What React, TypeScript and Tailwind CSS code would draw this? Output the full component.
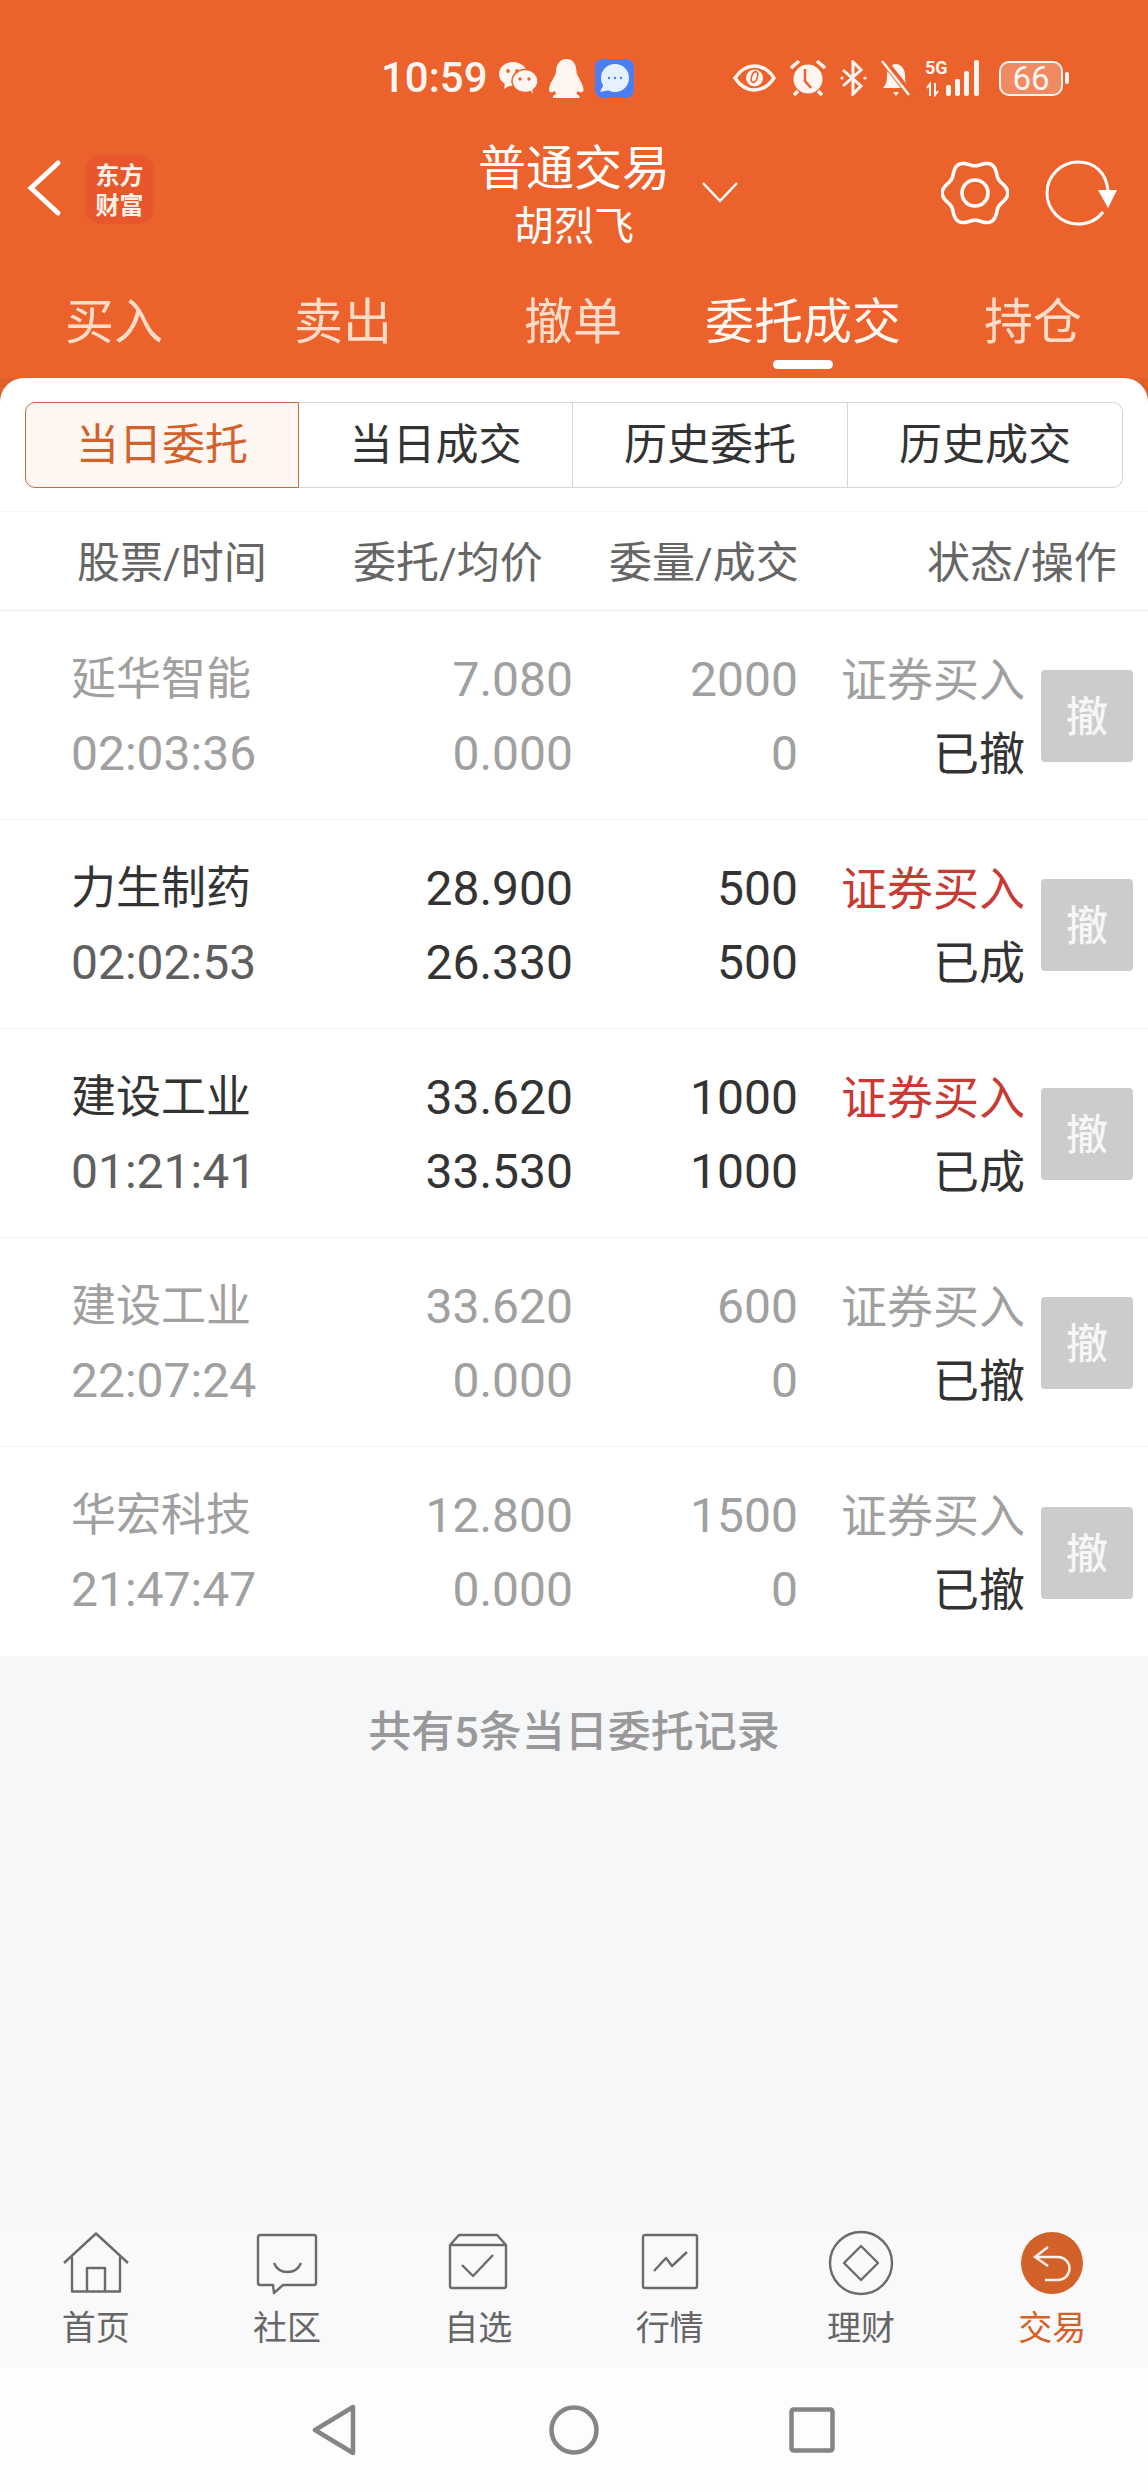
import React from 'react';

const rows = [
  { n: '延华智能', t: '02:03:36', a: '7.080', b: '0.000', c: '2000', d: '0', s: '已撤', on: false },
  { n: '力生制药', t: '02:02:53', a: '28.900', b: '26.330', c: '500', d: '500', s: '已成', on: true },
  { n: '建设工业', t: '01:21:41', a: '33.620', b: '33.530', c: '1000', d: '1000', s: '已成', on: true },
  { n: '建设工业', t: '22:07:24', a: '33.620', b: '0.000', c: '600', d: '0', s: '已撤', on: false },
  { n: '华宏科技', t: '21:47:47', a: '12.800', b: '0.000', c: '1500', d: '0', s: '已撤', on: false },
];

function Row({ r }: { r: (typeof rows)[number] }) {
  const main = r.on ? 'text-[#333333]' : 'text-[#a0a0a0]';
  return (
    <div className="flex h-[209px] items-center border-b border-[#f0f0f0] bg-white last:border-b-0">
      <div className="ml-[71px] w-[220px] pt-[3px] leading-[74px]">
        <div className={`text-[45px] ${main}`}>{r.n}</div>
        <div className={`text-[48px] ${r.on ? 'text-[#5f5f5f]' : 'text-[#a0a0a0]'}`}>{r.t}</div>
      </div>
      <div className={`w-[282px] pt-[3px] text-right text-[48px] leading-[74px] ${main}`}>
        <div>{r.a}</div><div>{r.b}</div>
      </div>
      <div className={`w-[225px] pt-[3px] text-right text-[48px] leading-[74px] ${main}`}>
        <div>{r.c}</div><div>{r.d}</div>
      </div>
      <div className="w-[227px] pt-[3px] text-right text-[46px] leading-[74px]">
        <div className={r.on ? 'text-[#c93a33]' : 'text-[#a0a0a0]'}>证券买入</div>
        <div className="text-[#333333]">{r.s}</div>
      </div>
      <div className="mt-[2px] ml-[16px] flex h-[92px] w-[92px] items-center justify-center rounded-[4px] bg-[#cccccc] pt-[3px] text-[42px] font-medium text-[#f6f6f6]">撤</div>
    </div>
  );
}

function gearPath() {
  const pts: string[] = [];
  for (let i = 0; i < 180; i++) {
    const th = (i / 180) * Math.PI * 2;
    const r = 30 + 2.8 * Math.cos(6 * th);
    pts.push(`${(34 + r * Math.cos(th)).toFixed(2)} ${(33 + r * Math.sin(th)).toFixed(2)}`);
  }
  return 'M' + pts.join('L') + 'Z';
}

function Status() {
  const c = '#fff5f0';
  const o = '#eb622d';
  return (
    <div className="flex h-[130px] items-center pt-[26px] pl-[381px] text-[#fff5f0]">
      <span className="w-[111px] text-[42px] leading-[50px] font-medium">10:59</span>
      <svg width="39" height="32" viewBox="0 0 39 32" className="ml-[7px]">
        <ellipse cx="14" cy="12" rx="14" ry="12" fill={c} />
        <path d="M6 20l-1 7 7-4z" fill={c} />
        <ellipse cx="26" cy="19" rx="13" ry="11.5" fill={c} stroke={o} strokeWidth="1.5" />
        <path d="M31 28l3 4-1-6z" fill={c} />
        <circle cx="9" cy="9" r="1.9" fill={o} /><circle cx="18" cy="9" r="1.9" fill={o} />
        <circle cx="21" cy="17" r="1.7" fill={o} /><circle cx="30" cy="17" r="1.7" fill={o} />
      </svg>
      <svg width="35" height="39" viewBox="0 0 35 39" className="ml-[11px]">
        <path d="M17.5 0c7 0 10 6 10 13 0 4 7 11 7 18 0 2-2 3-4 2l-2-1-1 3 3 2v2H4v-2l3-2-1-3-2 1c-2 1-4 0-4-2 0-7 7-14 7-18C7 6 10.500 0 17.500 0z" fill={c} />
      </svg>
      <svg width="39" height="39" viewBox="0 0 39 39" className="ml-[11px]">
        <rect width="39" height="39" rx="8" fill="#4d7ef0" />
        <circle cx="20" cy="19" r="14" fill="#e6f1ff" />
        <path d="M5 33l4-8 6 6z" fill="#e6f1ff" />
        <circle cx="14" cy="19" r="1.2" fill="#4d7ef0" /><circle cx="20" cy="19" r="1.2" fill="#4d7ef0" /><circle cx="26" cy="19" r="1.2" fill="#4d7ef0" />
      </svg>
      <svg width="43" height="28" viewBox="0 0 43 28" className="ml-[99px]">
        <path d="M2 14C8 5 15 2 21.500 2S35 5 41 14c-6 9-13 12-19.500 12S8 23 2 14z" fill="none" stroke={c} strokeWidth="3.500" />
        <circle cx="21.500" cy="14" r="8.500" fill={c} />
        <ellipse cx="21.500" cy="13" rx="2.800" ry="5.500" fill="none" stroke={o} strokeWidth="1.600" transform="rotate(20 21.500 13)" />
      </svg>
      <svg width="38" height="36" viewBox="0 0 38 36" className="ml-[13px]">
        <circle cx="19" cy="19" r="14.500" fill={c} />
        <path d="M2 8l8-7M36 8l-8-7M9 31l-4 4M29 31l4 4" stroke={c} strokeWidth="3.500" fill="none" />
        <path d="M16 9v12l6 7" stroke={o} strokeWidth="2.500" fill="none" />
      </svg>
      <svg width="27" height="36" viewBox="0 0 27 36" className="ml-[13px]">
        <path d="M3 10l18 16-8 8V2l8 8L3 26" fill="none" stroke={c} strokeWidth="3" />
        <circle cx="2" cy="18" r="1.600" fill={c} /><circle cx="25" cy="18" r="1.600" fill={c} />
      </svg>
      <svg width="34" height="38" viewBox="0 0 34 38" className="ml-[12px]">
        <path d="M4 29c3-3 4-7 4-13 0-6 4-11 9-11s9 5 9 11c0 6 1 10 4 13z" fill={c} />
        <path d="M14 33h6l-3 4z" fill={c} />
        <path d="M4 1l27 34" stroke={o} strokeWidth="7" />
        <path d="M3 2l27 34" stroke={c} strokeWidth="2.500" />
      </svg>
      <div className="relative ml-[12px] h-[37px] w-[58px]">
        <span className="absolute top-[-1px] left-0 text-[18px] leading-[18px] font-bold">5G</span>
        <svg width="58" height="37" viewBox="0 0 58 37" className="absolute inset-0">
          <path d="M5 36V24l-3 4M10 23v12l3-4" fill="none" stroke={c} strokeWidth="2" />
          <rect x="21" y="25" width="5" height="11" rx="2" fill={c} /><rect x="30" y="19" width="5" height="17" rx="2" fill={c} />
          <rect x="39" y="11" width="5" height="25" rx="2" fill={c} /><rect x="49" y="0" width="5" height="36" rx="2" fill={c} />
        </svg>
      </div>
      <div className="ml-[16px] flex h-[35px] w-[64px] items-center justify-center rounded-[10px] border-2 border-[#fff5f0] bg-[#f08a63] text-[33px] leading-none">66</div>
      <div className="ml-[2px] h-[12px] w-[4px] rounded-full bg-[#fff5f0]" />
    </div>
  );
}

const Icon = ({ children }: { children: React.ReactNode }) => (
  <svg width="70" height="66" viewBox="0 0 70 66" fill="none" stroke="#6b6b6b" strokeWidth="2.400" strokeLinejoin="round">{children}</svg>
);
const nav = [
  { l: '首页', i: <Icon><path d="M3 33L35 3.500 67 33M11 27v34.500h48V27M26 61.500V38h18v23.500" /></Icon> },
  { l: '社区', i: <Icon><path d="M8 5h54a2 2 0 0 1 2 2v46a2 2 0 0 1-2 2H31l-9 8-1-8H8a2 2 0 0 1-2-2V7a2 2 0 0 1 2-2z" /><path d="M22 33c5 12 22 12 27 0" /></Icon> },
  { l: '自选', i: <Icon><path d="M7 15l9-10h38l9 10v41a2 2 0 0 1-2 2H9a2 2 0 0 1-2-2zM7 15h56" /><path d="M19 35l11 11 20-21" /></Icon> },
  { l: '行情', i: <Icon><rect x="8" y="5" width="54" height="53" rx="2" /><path d="M19 41l12-13 6 8 15-14" /></Icon> },
  { l: '理财', i: <Icon><circle cx="35" cy="33" r="31" /><path d="M35 16l17 17-17 17-17-17z" /></Icon> },
];

export default function App() {
  return (
    <div className="flex h-[2492px] w-[1148px] flex-col overflow-hidden bg-[#f6f7f9] font-['Roboto','Noto_Sans_CJK_SC',sans-serif]">
      <div className="h-[378px] shrink-0 bg-[#eb622d]">
        <Status />
        <div className="relative flex h-[120px] items-center">
          <svg width="36" height="58" viewBox="0 0 36 58" fill="none" stroke="#fff" strokeWidth="5" strokeLinecap="round" className="mt-[-4px] ml-[26px]"><path d="M32 4L5 29l27 25" /></svg>
          <div className="mt-[-2px] ml-[23px] flex h-[69px] w-[69px] flex-col items-center justify-center rounded-[16px] bg-[#e8562b] font-['Noto_Sans_CJK_SC',sans-serif] text-[24px] leading-[30px] font-bold text-[#fff1e8]"><span>东方</span><span>财富</span></div>
          <div className="absolute top-[7px] left-0 w-full text-center text-white">
            <div className="text-[48px] leading-[64px]">普通交易</div>
            <div className="mt-[1px] text-[40px] leading-[50px]">胡烈飞</div>
          </div>
          <svg width="38" height="22" viewBox="0 0 38 22" fill="none" stroke="#fff" strokeWidth="2.500" className="absolute top-[51px] left-[701px]"><path d="M2 2l17 18L36 2" /></svg>
          <svg width="68" height="66" viewBox="0 0 68 66" fill="none" stroke="#fff" strokeWidth="3.600" className="absolute top-[30px] left-[941px]">
            <path d={gearPath()} />
            <circle cx="34" cy="33" r="13" />
          </svg>
          <svg width="72" height="66" viewBox="0 0 72 66" fill="none" stroke="#fff" strokeWidth="3" className="absolute top-[30px] left-[1045px]">
            <path d="M63 30C61 13 50 2 33 2 16 2 2 16 2 33s14 31 31 31c11 0 19-4 25-12" />
            <path d="M53 30h19L63 48z" fill="#fff" stroke="none" />
          </svg>
        </div>
        <div className="relative h-[128px] text-[49px] leading-[64px]">
          {([['买入', 114, false], ['卖出', 343, false], ['撤单', 573, false], ['委托成交', 803, true], ['持仓', 1033, false]] as const).map(([t, x, on]) => (
            <span key={t} className={`absolute top-[41px] -translate-x-1/2 whitespace-nowrap ${on ? 'text-[#fff7f2]' : 'text-[#ffdcc8]'}`} style={{ left: x }}>{t}</span>
          ))}
          <div className="absolute top-[110px] left-[773px] h-[9px] w-[60px] rounded-full bg-white" />
        </div>
      </div>

      <div className="shrink-0 bg-[#e0602c]">
        <div className="flex flex-col overflow-hidden rounded-t-[24px] bg-white">
          <div className="flex h-[134px] items-start border-b border-[#f5f5f5] pt-[24px] pl-[25px] text-[43px] leading-none text-[#333333]">
            <div className="flex h-[86px] w-[274px] items-center justify-center rounded-l-[10px] border border-[#c96a3e] bg-[#fef6f1] text-[#d2622c]">当日委托</div>
            <div className="flex h-[86px] w-[274px] items-center justify-center border-y border-r border-[#d6d6d6]">当日成交</div>
            <div className="flex h-[86px] w-[275px] items-center justify-center border-y border-r border-[#d6d6d6]">历史委托</div>
            <div className="flex h-[86px] w-[275px] items-center justify-center rounded-r-[10px] border-y border-r border-[#d6d6d6]">历史成交</div>
          </div>
          <div className="flex h-[99px] items-center border-b border-[#ececec] pt-[5px] text-[43px] text-[#666666]">
            <span className="ml-[77px] w-[276px]">股票/时间</span>
            <span className="w-[256px]">委托/均价</span>
            <span className="w-[318px]">委量/成交</span>
            <span>状态/操作</span>
          </div>
          {rows.map((r, i) => <Row key={i} r={r} />)}
        </div>
      </div>

      <div className="flex h-[152px] shrink-0 items-center justify-center text-[43px] leading-none font-medium text-[#999999]">共有5条当日委托记录</div>

      <div className="flex-1" />

      <div className="grid h-[138px] shrink-0 grid-cols-6 bg-[#f9f9fb] text-[34px] leading-[44px] text-[#666666]">
        {nav.map(n => (
          <div key={n.l} className="flex flex-col items-center">
            <div className="h-[66px]">{n.i}</div>
            <span className="mt-[10px]">{n.l}</span>
          </div>
        ))}
        <div className="flex flex-col items-center">
          <div className="h-[66px]">
            <svg width="70" height="66" viewBox="0 0 70 66" fill="none" stroke="#fff2e8" strokeWidth="2.400">
              <circle cx="35" cy="33" r="31" fill="#d3622a" stroke="none" />
              <path d="M31 17L18 27l13 9M19 27h22a11.500 11.500 0 0 1 0 23H28" />
            </svg>
          </div>
          <span className="mt-[10px] text-[#d3622a]">交易</span>
        </div>
      </div>

      <div className="flex h-[124px] shrink-0 items-center bg-[#fdfdfd]">
        <svg width="44" height="52" viewBox="0 0 44 52" fill="none" stroke="#858585" strokeWidth="4.500" strokeLinejoin="round" className="ml-[312px]"><path d="M3 26L41 3v46z" /></svg>
        <svg width="50" height="50" viewBox="0 0 50 50" fill="none" stroke="#858585" strokeWidth="4.500" className="ml-[193px]"><circle cx="25" cy="25" r="22.500" /></svg>
        <svg width="46" height="46" viewBox="0 0 46 46" fill="none" stroke="#858585" strokeWidth="4.500" strokeLinejoin="round" className="ml-[190px]"><rect x="2.500" y="2.500" width="41" height="41" rx="2" /></svg>
      </div>
    </div>
  );
}
